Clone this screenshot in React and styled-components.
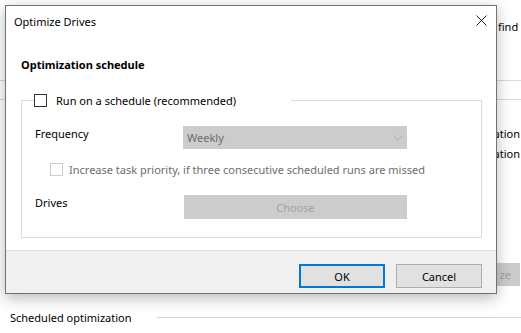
import React from "react";
import styled, { createGlobalStyle } from "styled-components";

const Global = createGlobalStyle`
  html, body { margin: 0; padding: 0; background: #ffffff; }
  body { font-family: "Noto Sans", "Open Sans", sans-serif; font-size: 11px; color: #000; }
  * { box-sizing: border-box; }
`;

const Page = styled.div`
  position: relative;
  width: 521px;
  height: 333px;
  overflow: hidden;
  background: #ffffff;
`;

/* ---------- background window ---------- */
const BackWindow = styled.div`
  display: flex;
  flex-direction: column;
  width: 100%;
  height: 100%;
`;

const BackRow = styled.div`
  display: flex;
  align-items: center;
  justify-content: ${(p) => (p.$end ? "flex-end" : "flex-start")};
  flex: none;
  padding-left: ${(p) => p.$indent || 0}px;
  padding-right: ${(p) => (p.$end ? 1 : 0)}px;
  height: ${(p) => p.$h}px;
  white-space: nowrap;
  border-bottom: ${(p) => (p.$line ? "1px solid #d9d9d9" : "none")};
`;

const BackText = styled.span`
  font-size: 11px;
  color: #000;
`;

const BackButton = styled.div`
  width: 90px;
  height: 23px;
  background: #cccccc;
  color: #a0a0a0;
  display: flex;
  align-items: center;
  justify-content: flex-end;
  padding-right: 9px;
`;

const SectionRow = styled.div`
  display: flex;
  align-items: center;
  flex: none;
  gap: 25px;
  padding-left: 10px;
  height: 20px;
`;

const SectionLine = styled.div`
  flex: 1;
  height: 1px;
  background: #d5d5d5;
`;

/* ---------- dialog ---------- */
const Dialog = styled.div`
  position: absolute;
  left: 5px;
  top: 5px;
  width: 492px;
  height: 289px;
  border: 1px solid #727272;
  background: #ffffff;
  display: flex;
  flex-direction: column;
  box-shadow: 0 4px 14px rgba(0, 0, 0, 0.28);
`;

const TitleBar = styled.div`
  height: 30px;
  display: flex;
  align-items: center;
  justify-content: space-between;
  padding: 0 9px 0 8px;
`;

const Title = styled.span`
  font-size: 11px;
  color: #000;
  margin-top: 1px;
`;

const CloseBtn = styled.div`
  width: 12px;
  height: 12px;
  display: flex;
  align-items: center;
  justify-content: center;
  margin-top: -1px;
`;

const Body = styled.div`
  flex: 1;
  padding: 21px 14px 0 15px;
  display: flex;
  flex-direction: column;
`;

const Heading = styled.div`
  font-weight: 700;
  font-size: 11px;
  padding-left: 0;
  line-height: 16px;
`;

const Group = styled.fieldset`
  margin: 19px 0 0 0;
  padding: 0 12px 18px 12px;
  border: 1px solid #dcdcdc;
  min-width: 0;
  width: 461px;
`;

const Legend = styled.legend`
  padding: 0;
  width: 257px;
  display: flex;
  align-items: center;
  gap: 9px;
  height: 16px;
`;

const Box = styled.span`
  width: 13px;
  height: 13px;
  border: 1px solid ${(p) => (p.$disabled ? "#cccccc" : "#333333")};
  background: #fff;
  flex: none;
`;

const FieldRow = styled.div`
  display: grid;
  grid-template-columns: 148px auto;
  align-items: start;
  margin-top: ${(p) => p.$mt}px;
  padding-left: 1px;
`;

const FieldLabel = styled.span`
  font-size: 11px;
  line-height: 16px;
  margin-top: ${(p) => p.$mt || 0}px;
`;

const Select = styled.div`
  width: 224px;
  height: 23px;
  background: #cccccc;
  color: #6d6d6d;
  display: flex;
  align-items: center;
  justify-content: space-between;
  padding: 0 4px 0 4px;
  font-size: 11px;
`;

const ChooseButton = styled.div`
  width: 223px;
  height: 24px;
  margin-left: 1px;
  background: #cccccc;
  color: #a3a3a3;
  display: flex;
  align-items: center;
  justify-content: center;
  font-size: 11px;
`;

const CheckRow = styled.div`
  display: flex;
  align-items: center;
  gap: 6px;
  margin-top: ${(p) => p.$mt}px;
  padding-left: 16px;
  color: #6d6d6d;
  height: 13px;
  white-space: nowrap;
`;

const Footer = styled.div`
  height: 43px;
  border-top: 1px solid #dfdfdf;
  background: #f0f0f0;
  display: flex;
  justify-content: flex-end;
  align-items: flex-start;
  gap: 11px;
  padding: 13px 14px 0 0;
`;

const Button = styled.div`
  width: 86px;
  height: 24px;
  background: #e1e1e1;
  border: ${(p) => (p.$primary ? "2px solid #0078d7" : "1px solid #adadad")};
  display: flex;
  align-items: center;
  justify-content: center;
  font-size: 11px;
  color: #000;
`;

export default function App() {
  return (
    <>
      <Global />
      <Page>
        <BackWindow>
          <BackRow $h={12} />
          <BackRow $h={28} $indent={498}>
            <BackText>find</BackText>
          </BackRow>
          <BackRow $h={41} $line />
          <BackRow $h={19} $line />
          <BackRow $h={23} />
          <BackRow $h={20} $end>
            <BackText>optimization</BackText>
          </BackRow>
          <BackRow $h={20} $end>
            <BackText>optimization</BackText>
          </BackRow>
          <BackRow $h={100} />
          <BackRow $h={23} $indent={430}>
            <BackButton>ze</BackButton>
          </BackRow>
          <BackRow $h={21} />
          <SectionRow>
            <BackText>Scheduled optimization</BackText>
            <SectionLine />
          </SectionRow>
        </BackWindow>

        <Dialog>
          <TitleBar>
            <Title>Optimize Drives</Title>
            <CloseBtn>
              <svg width="11" height="11" viewBox="0 0 11 11">
                <path d="M0.5 0.5 L10.5 10.5 M10.5 0.5 L0.5 10.5" stroke="#222" strokeWidth="1" fill="none" />
              </svg>
            </CloseBtn>
          </TitleBar>
          <Body>
            <Heading>Optimization schedule</Heading>
            <Group>
              <Legend>
                <Box />
                <span>Run on a schedule (recommended)</span>
              </Legend>
              <FieldRow $mt={18}>
                <FieldLabel $mt={0}>Frequency</FieldLabel>
                <Select>
                  <span>Weekly</span>
                  <svg width="10" height="6" viewBox="0 0 10 6">
                    <path d="M0.5 0.5 L5 5 L9.5 0.5" stroke="#b0b0b0" strokeWidth="1" fill="none" />
                  </svg>
                </Select>
              </FieldRow>
              <CheckRow $mt={14}>
                <Box $disabled />
                <span>Increase task priority, if three consecutive scheduled runs are missed</span>
              </CheckRow>
              <FieldRow $mt={19}>
                <FieldLabel $mt={0}>Drives</FieldLabel>
                <ChooseButton>Choose</ChooseButton>
              </FieldRow>
            </Group>
          </Body>
          <Footer>
            <Button $primary>OK</Button>
            <Button>Cancel</Button>
          </Footer>
        </Dialog>
      </Page>
    </>
  );
}
